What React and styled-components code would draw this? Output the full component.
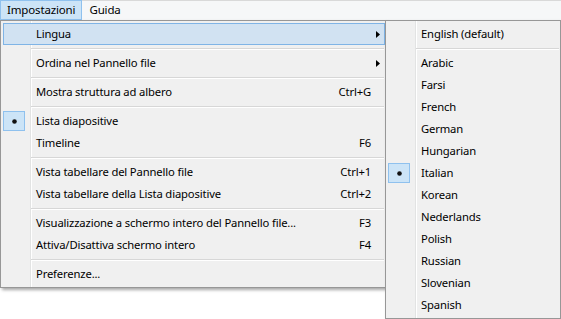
import styled, { createGlobalStyle } from "styled-components"

const GlobalStyle = createGlobalStyle`
    html, body {
        margin: 0;
        padding: 0;
        background: #ffffff;
    }
    body {
        font-family: "Noto Sans", "Open Sans", sans-serif;
        font-size: 11.25px;
        letter-spacing: -0.15px;
        color: #000000;
    }
`

const mainItems = [
    { label: "Lingua", arrow: true, hot: true },
    "sep",
    { label: "Ordina nel Pannello file", arrow: true },
    "sep",
    { label: "Mostra struttura ad albero", shortcut: "Ctrl+G" },
    "sep",
    { label: "Lista diapositive", checked: true },
    { label: "Timeline", shortcut: "F6" },
    "sep",
    { label: "Vista tabellare del Pannello file", shortcut: "Ctrl+1" },
    { label: "Vista tabellare della Lista diapositive", shortcut: "Ctrl+2" },
    "sep",
    { label: "Visualizzazione a schermo intero del Pannello file...", shortcut: "F3" },
    { label: "Attiva/Disattiva schermo intero", shortcut: "F4" },
    "sep",
    { label: "Preferenze..." },
]

const languages = [
    { label: "English (default)" },
    "sep",
    { label: "Arabic" },
    { label: "Farsi" },
    { label: "French" },
    { label: "German" },
    { label: "Hungarian" },
    { label: "Italian", checked: true },
    { label: "Korean" },
    { label: "Nederlands" },
    { label: "Polish" },
    { label: "Russian" },
    { label: "Slovenian" },
    { label: "Spanish" },
]

function Arrow() {
    return (
        <svg width="4" height="7" viewBox="0 0 4 7">
            <polygon points="0,0 4,3.5 0,7" fill="#000" />
        </svg>
    )
}

function Dot() {
    return (
        <svg width="5" height="5" viewBox="0 0 5 5">
            <circle cx="2.5" cy="2.5" r="2.3" fill="#111" />
        </svg>
    )
}

function MenuEntries({ items }) {
    return items.map((it, i) =>
        it === "sep" ? (
            <Separator key={i} />
        ) : (
            <Item key={i} $hot={it.hot}>
                <Gutter>{it.checked && <CheckBox><Dot /></CheckBox>}</Gutter>
                <Label>{it.label}</Label>
                <Shortcut>{it.shortcut}</Shortcut>
                <ArrowCell>{it.arrow && <Arrow />}</ArrowCell>
            </Item>
        )
    )
}

export default function App() {
    return (
        <Page>
            <GlobalStyle />
            <MenuBar>
                <BarItem $open>Impostazioni</BarItem>
                <BarItem>Guida</BarItem>
            </MenuBar>
            <Popups>
                <Menu $width={386}>
                    <MenuEntries items={mainItems} />
                </Menu>
                <SubMenu $width={176}>
                    <MenuEntries items={languages} />
                </SubMenu>
            </Popups>
        </Page>
    )
}

const Page = styled.div`
    width: 561px;
    height: 319px;
    overflow: hidden;
    background: #ffffff;
`

const MenuBar = styled.div`
    display: flex;
    height: 20px;
    box-sizing: border-box;
    background: #f6f7f8;
    border-top: 1px solid #d9d9d9;
`

const BarItem = styled.div`
    display: flex;
    align-items: center;
    margin-top: -1px;
    height: 20px;
    box-sizing: border-box;
    padding: 0 6px 1px;
    font-size: 11.5px;
    border: 1px solid ${(p) => (p.$open ? "#8fc1ee" : "transparent")};
    background: ${(p) => (p.$open ? "#cce4f7" : "transparent")};
`

const Popups = styled.div`
    display: flex;
    align-items: flex-start;
`

const Menu = styled.div`
    position: relative;
    width: ${(p) => p.$width}px;
    box-sizing: border-box;
    padding: 2px 0 2px 2px;
    border: 1px solid #979797;
    background:
        linear-gradient(
            to right,
            transparent 29px,
            #e2e3e3 29px,
            #e2e3e3 30px,
            #ffffff 30px,
            #ffffff 31px,
            transparent 31px
        ),
        #f0f0f0;
    box-shadow: 2px 2px 3px rgba(0, 0, 0, 0.35);
`

const SubMenu = styled(Menu)`
    margin-left: -1px;
    z-index: 1;
`

const Item = styled.div`
    display: grid;
    grid-template-columns: 22px 1fr auto 14px;
    align-items: center;
    height: 22px;
    background: ${(p) => (p.$hot ? "#d1e2f2" : "transparent")};
    box-shadow: ${(p) => (p.$hot ? "inset 0 0 0 1px #7fb4e6" : "none")};
    white-space: nowrap;
`

const Gutter = styled.div`
    display: flex;
    height: 22px;
    align-items: center;
`

const CheckBox = styled.div`
    display: flex;
    align-items: center;
    justify-content: center;
    width: 22px;
    height: 20px;
    box-sizing: border-box;
    background: #cce4f7;
    border: 1px solid #8fc1ee;
`

const Label = styled.span`
    padding: 0 0 2px 11px;
`

const Shortcut = styled.span`
    text-align: right;
    padding-bottom: 2px;
`

const ArrowCell = styled.span`
    display: flex;
    align-items: center;
    justify-content: flex-end;
    padding-right: 5px;
`

const Separator = styled.div`
    height: 1px;
    margin: 3px 1px 2px 28px;
    background: #d7d7d7;
    border-bottom: 1px solid #ffffff;
`
